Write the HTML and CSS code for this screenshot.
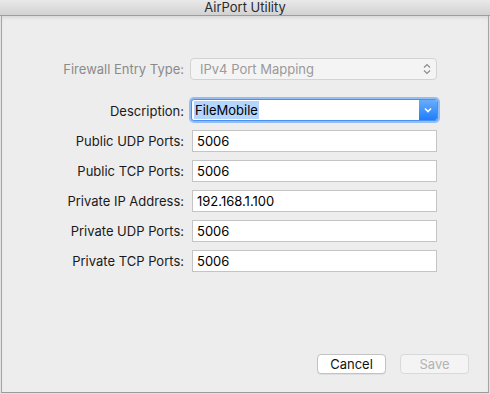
FILE: index.html
```html
<!DOCTYPE html>
<html lang="en">
<head>
    <meta charset="UTF-8">
    <title>AirPort Utility</title>
    <link rel="stylesheet" href="styles.css">
</head>
<body>
    <div class="titlebar">AirPort Utility</div>
    <div class="sheet">
        <div class="form">
            <label class="label dim">Firewall Entry Type:</label>
            <div class="popup">
                <span>IPv4 Port Mapping</span>
                <svg class="stepper" width="8" height="12" viewBox="0 0 8 12"><path d="M1 4.5 L4 1.5 L7 4.5 M1 7.5 L4 10.5 L7 7.5" fill="none" stroke="#8c8c8c" stroke-width="1.2"/></svg>
            </div>

            <label class="label desc">Description:</label>
            <div class="combo desc">
                <span class="value"><span class="sel">FileMobile</span></span>
                <span class="combo-btn"><svg width="8" height="6" viewBox="0 0 8 6"><path d="M1 1.5 L4 4.5 L7 1.5" fill="none" stroke="#fff" stroke-width="1.6"/></svg></span>
            </div>

            <label class="label">Public UDP Ports:</label>
            <div class="field">5006</div>

            <label class="label">Public TCP Ports:</label>
            <div class="field">5006</div>

            <label class="label">Private IP Address:</label>
            <div class="field">192.168.1.100</div>

            <label class="label">Private UDP Ports:</label>
            <div class="field">5006</div>

            <label class="label">Private TCP Ports:</label>
            <div class="field">5006</div>
        </div>

        <div class="buttons">
            <button class="btn">Cancel</button>
            <button class="btn disabled">Save</button>
        </div>
    </div>
</body>
</html>
```

FILE: styles.css
```css
body { margin: 0; width: 490px; height: 394px; background: #e2e2e2; font-family: Inter, "Liberation Sans", sans-serif; font-size: 13px; color: #1a1a1a; overflow: hidden; display: flex; flex-direction: column; }
.titlebar { height: 15px; line-height: 15px; text-align: center; background: linear-gradient(#e9e9e9, #d2d2d2); color: #2a2a2a; font-size: 13px; border-bottom: 1px solid #9d9d9d; }
.sheet { flex: 1; margin: 0 1px 1px 1px; background: #ededed; border-left: 1px solid #a6a6a6; border-right: 1px solid #a6a6a6; border-bottom: 1px solid #9a9a9a; box-shadow: inset 0 3px 4px -2px rgba(0,0,0,0.12); display: flex; flex-direction: column; }
.form { display: grid; grid-template-columns: 182px 245px; column-gap: 8px; row-gap: 8px; padding-top: 42px; align-items: center; }
.label { text-align: right; white-space: nowrap; }
.label.dim { color: #8a8a8a; }
.label.desc { margin-top: 11px; }
.popup { height: 20px; margin-left: -2px; border: 1px solid #d3d3d3; border-radius: 4px; background: #f4f4f4; color: #9a9a9a; display: flex; align-items: center; justify-content: space-between; padding: 0 5px 0 9px; }
.combo { height: 20px; margin-left: -1px; margin-right: -1px; margin-top: 11px; margin-bottom: 1px; border: 1px solid #4a90f0; border-radius: 3px; background: #fff; box-shadow: 0 0 0 2px #93bdf5; display: flex; align-items: center; }
.combo .value { flex: 1; padding-left: 2px; color: #000; }
.sel { background: #b3d5fe; padding: 1px 1px; }
.combo-btn { width: 18px; height: 20px; background: linear-gradient(#68adf9, #1f7efb); border-radius: 0 2px 2px 0; display: flex; align-items: center; justify-content: center; }
.field { height: 20px; line-height: 20px; border: 1px solid #c4c4c4; background: #fff; padding-left: 4px; color: #000; }
.buttons { margin-top: auto; display: flex; justify-content: flex-end; gap: 14px; padding: 0 19px 18px 0; }
.btn { width: 69px; height: 20px; font-family: inherit; font-size: 13px; border-radius: 4px; border: 1px solid #c2c2c2; background: #fff; color: #111; box-shadow: 0 1px 0 rgba(0,0,0,0.06); padding: 0; }
.btn.disabled { background: #f4f4f4; border-color: #d9d9d9; color: #b3b3b3; box-shadow: none; }
```
